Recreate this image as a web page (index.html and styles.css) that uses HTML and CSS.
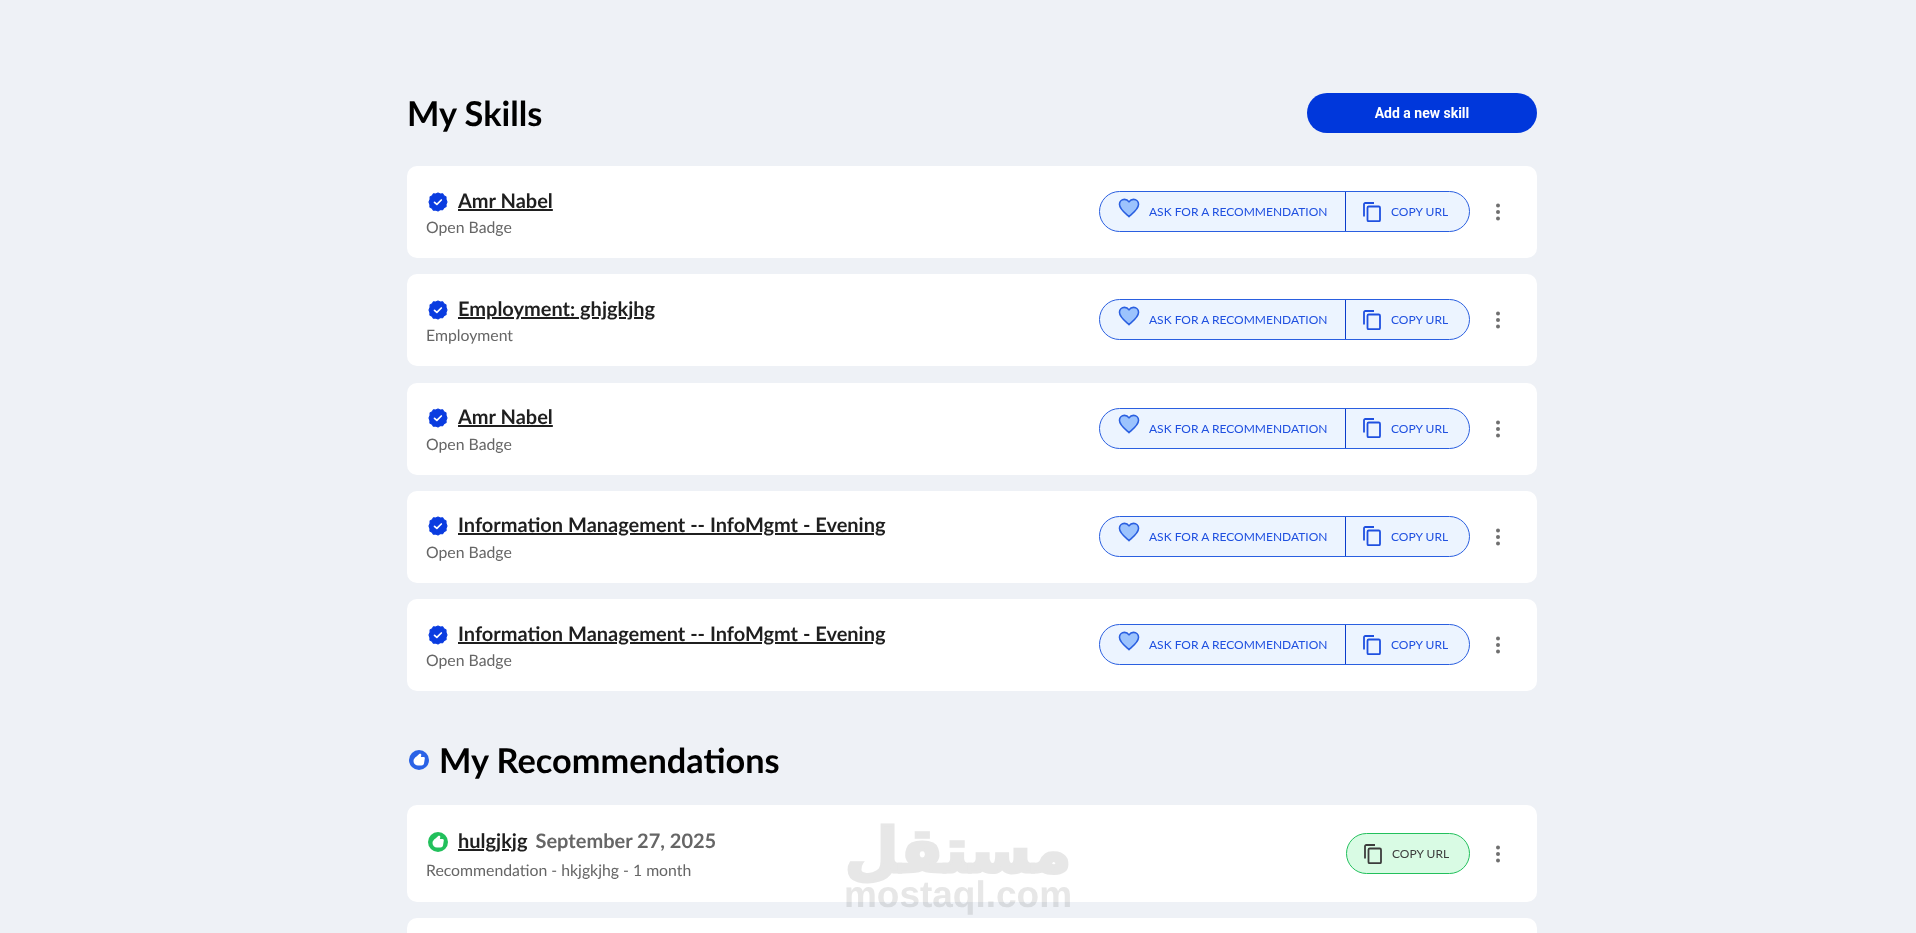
FILE: index.html
```html
<!DOCTYPE html>
<html lang="en">
<head>
<meta charset="utf-8">
<title>My Skills</title>
<link rel="stylesheet" href="styles.css">
</head>
<body>
<svg class="defs" width="0" height="0" aria-hidden="true">
  <symbol id="badge" viewBox="-0.6 -0.6 21.2 21.2">
    <path fill="#0a3ce0" stroke="#0a3ce0" stroke-width="1.2" stroke-linejoin="round" d="M10 .5l2.400 1.100 2.500-.4 1.400 2.200 2.200 1.200v2.600L19.500 10l-1 2.400.1 2.500-2.300 1.200-1.400 2.100-2.500-.3L10 19.500l-2.400-1.100-2.500.3-1.400-2.100-2.300-1.200.1-2.500L.5 10l1.100-2.800V4.600l2.200-1.200 1.400-2.200 2.400.4z"/>
    <path fill="none" stroke="#fff" stroke-width="1.800" stroke-linecap="round" stroke-linejoin="round" d="M6.300 10.300l2.500 2.300 4.700-4.700"/>
  </symbol>
  <symbol id="heart" viewBox="0 0 24 22">
    <path fill="#9cc3fd" stroke="#2a5fe0" stroke-width="1.700" stroke-linejoin="round" d="M12 20.500C8 17 1.500 12.500 1.500 7 1.500 3.800 4 1.500 7 1.500c2 0 3.800 1 5 2.800 1.200-1.800 3-2.800 5-2.800 3 0 5.500 2.300 5.500 5.500 0 5.500-6.500 10-10.500 13.500z"/>
  </symbol>
  <symbol id="copy" viewBox="0 0 18 20">
    <path fill="none" stroke="currentColor" stroke-width="1.800" d="M1 14.500V2.300C1 1.600 1.600 1 2.300 1H11"/>
    <rect x="4.500" y="4.500" width="12.500" height="14.700" rx="1.300" fill="none" stroke="currentColor" stroke-width="1.800"/>
  </symbol>
  <symbol id="dots" viewBox="0 0 6 18">
    <circle cx="3" cy="2.500" r="2" fill="#6f6f6f"/><circle cx="3" cy="9" r="2" fill="#6f6f6f"/><circle cx="3" cy="15.500" r="2" fill="#6f6f6f"/>
  </symbol>
  <symbol id="thumb" viewBox="0 0 20 20">
    <circle cx="10" cy="10" r="10" fill="currentColor"/>
    <path fill="#fff" d="M4.500 11C4.500 9 6 7.500 7.500 6.500L10.500 3.800C11.500 3.300 12.500 4 12.300 5L11.900 7H14.500C15.500 7 16 7.800 15.800 8.600L15 13.500C14.700 14.800 13.800 15.500 12.500 15.500H9C6.500 15.500 4.500 13.500 4.500 11Z"/>
  </symbol>
</svg>

<main class="page">
  <header class="section-head">
    <h1 class="heading">My Skills</h1>
    <button class="add-btn" type="button">Add a new skill</button>
  </header>

  <ul class="list">
    <li class="card">
      <div class="info">
        <div class="title-row"><svg class="badge"><use href="#badge"/></svg><a class="title" href="#">Amr Nabel</a></div>
        <p class="sub">Open Badge</p>
      </div>
      <div class="actions">
        <div class="pill">
          <button class="pill-part ask" type="button"><svg class="heart"><use href="#heart"/></svg>ASK FOR A RECOMMENDATION</button>
          <button class="pill-part copy" type="button"><svg class="copy-icon"><use href="#copy"/></svg>COPY URL</button>
        </div>
        <svg class="dots"><use href="#dots"/></svg>
      </div>
    </li>
    <li class="card">
      <div class="info">
        <div class="title-row"><svg class="badge"><use href="#badge"/></svg><a class="title" href="#">Employment: ghjgkjhg</a></div>
        <p class="sub">Employment</p>
      </div>
      <div class="actions">
        <div class="pill">
          <button class="pill-part ask" type="button"><svg class="heart"><use href="#heart"/></svg>ASK FOR A RECOMMENDATION</button>
          <button class="pill-part copy" type="button"><svg class="copy-icon"><use href="#copy"/></svg>COPY URL</button>
        </div>
        <svg class="dots"><use href="#dots"/></svg>
      </div>
    </li>
    <li class="card">
      <div class="info">
        <div class="title-row"><svg class="badge"><use href="#badge"/></svg><a class="title" href="#">Amr Nabel</a></div>
        <p class="sub">Open Badge</p>
      </div>
      <div class="actions">
        <div class="pill">
          <button class="pill-part ask" type="button"><svg class="heart"><use href="#heart"/></svg>ASK FOR A RECOMMENDATION</button>
          <button class="pill-part copy" type="button"><svg class="copy-icon"><use href="#copy"/></svg>COPY URL</button>
        </div>
        <svg class="dots"><use href="#dots"/></svg>
      </div>
    </li>
    <li class="card">
      <div class="info">
        <div class="title-row"><svg class="badge"><use href="#badge"/></svg><a class="title" href="#">Information Management -- InfoMgmt - Evening</a></div>
        <p class="sub">Open Badge</p>
      </div>
      <div class="actions">
        <div class="pill">
          <button class="pill-part ask" type="button"><svg class="heart"><use href="#heart"/></svg>ASK FOR A RECOMMENDATION</button>
          <button class="pill-part copy" type="button"><svg class="copy-icon"><use href="#copy"/></svg>COPY URL</button>
        </div>
        <svg class="dots"><use href="#dots"/></svg>
      </div>
    </li>
    <li class="card">
      <div class="info">
        <div class="title-row"><svg class="badge"><use href="#badge"/></svg><a class="title" href="#">Information Management -- InfoMgmt - Evening</a></div>
        <p class="sub">Open Badge</p>
      </div>
      <div class="actions">
        <div class="pill">
          <button class="pill-part ask" type="button"><svg class="heart"><use href="#heart"/></svg>ASK FOR A RECOMMENDATION</button>
          <button class="pill-part copy" type="button"><svg class="copy-icon"><use href="#copy"/></svg>COPY URL</button>
        </div>
        <svg class="dots"><use href="#dots"/></svg>
      </div>
    </li>
  </ul>

  <header class="rec-head">
    <svg class="rec-icon"><use href="#thumb"/></svg>
    <h2 class="heading">My Recommendations</h2>
  </header>

  <ul class="list">
    <li class="card rec-card">
      <div class="info">
        <div class="title-row"><svg class="badge green"><use href="#thumb"/></svg><a class="title" href="#">hulgjkjg</a><span class="date">September 27, 2025</span></div>
        <p class="sub rec-sub">Recommendation - hkjgkjhg - 1 month</p>
      </div>
      <div class="actions">
        <button class="pill-part copy solo" type="button"><svg class="copy-icon"><use href="#copy"/></svg>COPY URL</button>
        <svg class="dots"><use href="#dots"/></svg>
      </div>
    </li>
    <li class="card rec-card"></li>
  </ul>
</main>

<div class="watermark" aria-hidden="true">
  <span class="wm-ar">مستقل</span>
  <span class="wm-en">mostaql.com</span>
</div>
</body>
</html>
```
FILE: styles.css
```css
* { box-sizing: border-box; }
html, body { height: 100%; }
body {
  margin: 0;
  background: #eef1f6;
  font-family: "Lato", "Liberation Sans", sans-serif;
  color: #1a1a1a;
  overflow: hidden;
  text-rendering: geometricPrecision;
}
.defs { position: absolute; }
.page {
  width: 1130px;
  margin-left: 407px;
  padding-top: 93px;
}
.section-head {
  display: flex;
  justify-content: space-between;
  align-items: center;
  height: 40px;
  margin-bottom: 33px;
}
.heading {
  margin: 0;
  padding-top: 2px;
  font-size: 34.3px;
  line-height: 40px;
  font-weight: 700;
  color: #000;
}
.add-btn {
  width: 230px;
  height: 40px;
  border: 0;
  border-radius: 20px;
  background: #0037db;
  color: #fff;
  font: 700 14px "Roboto", sans-serif;
}
.list {
  list-style: none;
  margin: 0;
  padding: 0;
  display: flex;
  flex-direction: column;
  gap: 16.300px;
}
.card {
  height: 92px;
  background: #fff;
  border-radius: 10px;
  padding: 0 36px 0 19px;
  display: flex;
  align-items: center;
  justify-content: space-between;
}
.info { padding-top: 2px; }
.title-row {
  display: flex;
  align-items: center;
  height: 28px;
  padding-top: 1px;
}
.badge { width: 20px; height: 20px; margin: 2px 10px 0 2px; flex: none; }
.green { color: #22c05c; }
.title {
  font-size: 20px;
  line-height: 28px;
  font-weight: 700;
  color: #1f1f1f;
  text-decoration: underline;
}
.date { margin-left: 8px; font-size: 20px; font-weight: 700; color: #666; }
.sub { margin: 2px 0 0; font-size: 15.800px; line-height: 24px; color: #666; }
.rec-sub { margin-top: 5px; }
.actions { display: flex; align-items: center; gap: 25px; }
.pill {
  display: flex;
  height: 41px;
  margin-top: -1px;
  border: 1px solid #2a5fe0;
  border-radius: 21px;
  background: #ecf4ff;
}
.pill-part {
  display: flex;
  align-items: center;
  border: 0;
  background: none;
  padding: 0;
  font: 400 12px "Lato", sans-serif;
  color: #1f50e0;
}
.ask { width: 246px; padding-left: 18px; border-right: 1px solid #0a3ccb; }
.copy { width: 123px; padding-left: 17px; }
.heart { width: 22px; height: 20px; margin: -8px 9px 0 0; }
.copy-icon { width: 18px; height: 20px; margin-right: 10px; }
.dots { width: 6px; height: 18px; }
.solo {
  height: 41px;
  width: 124px;
  border: 1px solid #22c05c;
  border-radius: 21px;
  background: #d9fbe4;
  color: #3c3c3c;
}
.rec-head {
  display: flex;
  align-items: center;
  height: 40px;
  margin: 49px 0 25px;
}
.rec-icon { width: 20px; height: 20px; margin: 0 10px 0 2px; color: #2a62e6; }
.rec-card { height: 97px; }
.watermark {
  position: absolute;
  left: 843px;
  top: 826px;
  width: 230px;
  display: flex;
  flex-direction: column;
  align-items: center;
  color: #e7e7e7;
  mix-blend-mode: multiply;
  pointer-events: none;
}
.wm-ar {
  font: 700 62px/49px "DejaVu Sans", sans-serif;
  -webkit-text-stroke: 3px #e7e7e7;
}
.wm-en { font: 700 37px/40px "Liberation Sans", sans-serif; }
```
